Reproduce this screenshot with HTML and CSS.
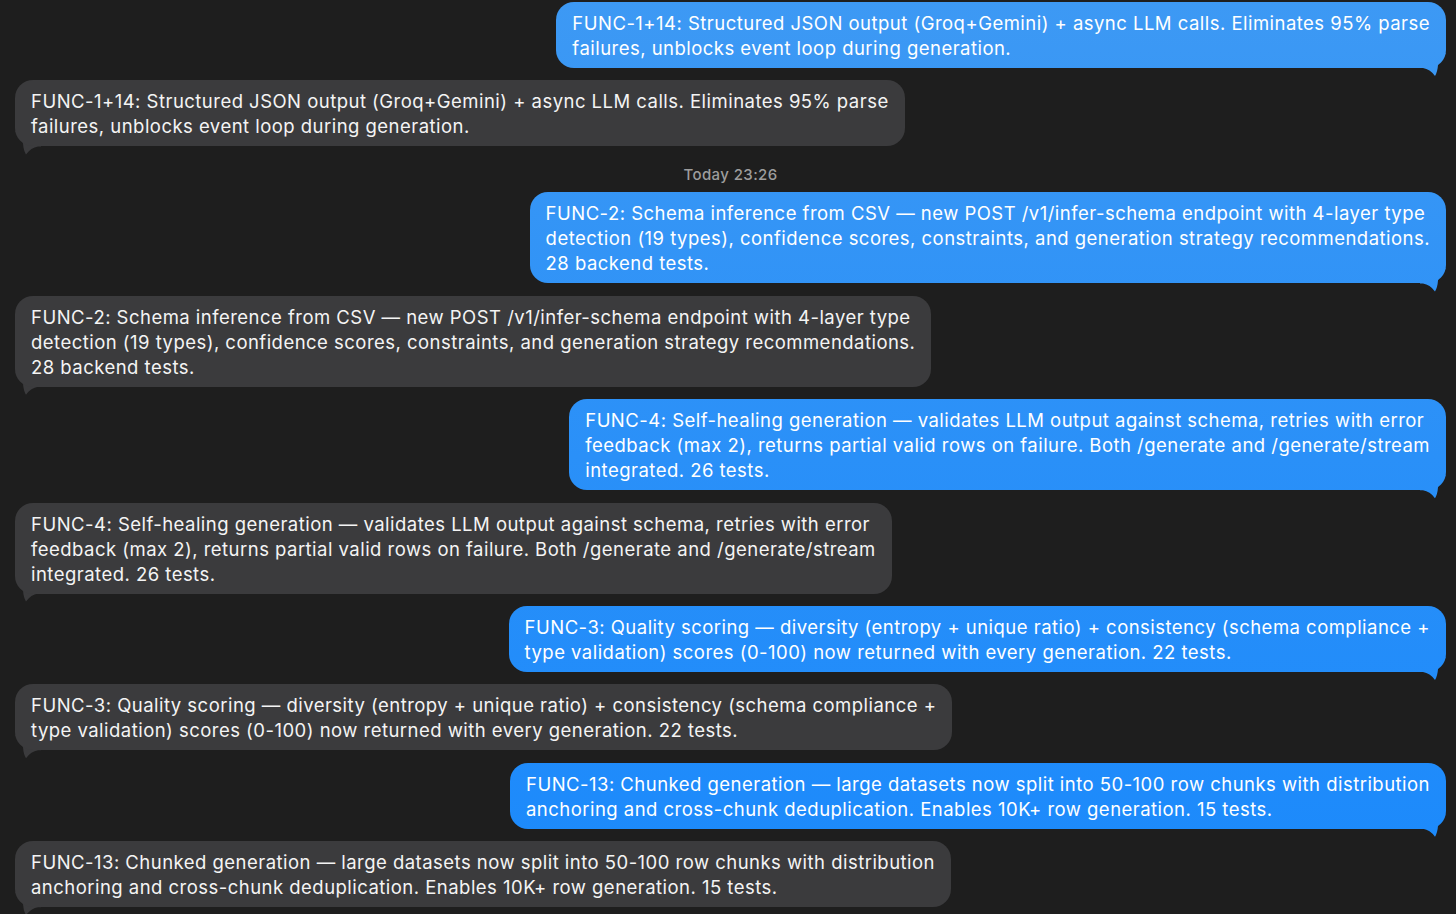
FILE: index.html
```html
<!DOCTYPE html>
<html lang="en">
<head>
<meta charset="utf-8">
<title>Messages</title>
<link rel="stylesheet" href="styles.css">
</head>
<body>
<main class="thread">
  <div class="msg out">FUNC-1+14: Structured JSON output (Groq+Gemini) + async LLM calls. Eliminates 95% parse<br>failures, unblocks event loop during generation.</div>
  <div class="msg in">FUNC-1+14: Structured JSON output (Groq+Gemini) + async LLM calls. Eliminates 95% parse<br>failures, unblocks event loop during generation.</div>
  <div class="stamp">Today 23:26</div>
  <div class="msg out">FUNC-2: Schema inference from CSV — new POST /v1/infer-schema endpoint with 4-layer type<br>detection (19 types), confidence scores, constraints, and generation strategy recommendations.<br>28 backend tests.</div>
  <div class="msg in">FUNC-2: Schema inference from CSV — new POST /v1/infer-schema endpoint with 4-layer type<br>detection (19 types), confidence scores, constraints, and generation strategy recommendations.<br>28 backend tests.</div>
  <div class="msg out">FUNC-4: Self-healing generation — validates LLM output against schema, retries with error<br>feedback (max 2), returns partial valid rows on failure. Both /generate and /generate/stream<br>integrated. 26 tests.</div>
  <div class="msg in">FUNC-4: Self-healing generation — validates LLM output against schema, retries with error<br>feedback (max 2), returns partial valid rows on failure. Both /generate and /generate/stream<br>integrated. 26 tests.</div>
  <div class="msg out">FUNC-3: Quality scoring — diversity (entropy + unique ratio) + consistency (schema compliance +<br>type validation) scores (0-100) now returned with every generation. 22 tests.</div>
  <div class="msg in">FUNC-3: Quality scoring — diversity (entropy + unique ratio) + consistency (schema compliance +<br>type validation) scores (0-100) now returned with every generation. 22 tests.</div>
  <div class="msg out">FUNC-13: Chunked generation — large datasets now split into 50-100 row chunks with distribution<br>anchoring and cross-chunk deduplication. Enables 10K+ row generation. 15 tests.</div>
  <div class="msg in">FUNC-13: Chunked generation — large datasets now split into 50-100 row chunks with distribution<br>anchoring and cross-chunk deduplication. Enables 10K+ row generation. 15 tests.</div>
</main>
</body>
</html>
```
FILE: styles.css
```css
html, body {
  margin: 0;
  padding: 0;
  background: #1e1e1e;
  height: 100%;
  overflow: hidden;
}

.thread {
  position: relative;
  z-index: 0;
  display: flex;
  flex-direction: column;
  padding: 2px 10px 0 15px;
  font-family: Inter, "Liberation Sans", Arial, sans-serif;
}

.msg {
  position: relative;
  width: max-content;
  white-space: nowrap;
  font-size: 18.5px;
  letter-spacing: 0.47px;
  line-height: 25px;
  padding: 9px 16px 7px;
  border-radius: 18px;
  color: #ffffff;
  margin-top: 12.4px;
}

.msg:first-child {
  margin-top: 0;
}

.msg.out {
  align-self: flex-end;
  background: linear-gradient(180deg, #3d99f4 0%, #2a90f8 50%, #1a89fc 100%) fixed;
}

.msg.in {
  align-self: flex-start;
  background: #3b3b3d;
  color: #f4f4f4;
}

.msg::after {
  content: "";
  position: absolute;
  z-index: -1;
  bottom: -9px;
  width: 26px;
  height: 24px;
  background: inherit;
}

.msg.out::after {
  right: 0;
  clip-path: path("M0 0 L26 0 Q19 4 18 12 Q17.5 19 15 23 Q10 16 3 15 L0 15 Z");
}

.msg.in::after {
  left: 0;
  clip-path: path("M26 0 L0 0 Q7 4 8 12 Q8.5 19 11 23 Q16 16 23 15 L26 15 Z");
}

.stamp {
  align-self: center;
  margin-top: 18.5px;
  height: 20px;
  line-height: 20px;
  font-size: 15px;
  letter-spacing: 0.4px;
  font-weight: 500;
  color: #9d9d9d;
}

.stamp + .msg {
  margin-top: 7.5px;
}
```
